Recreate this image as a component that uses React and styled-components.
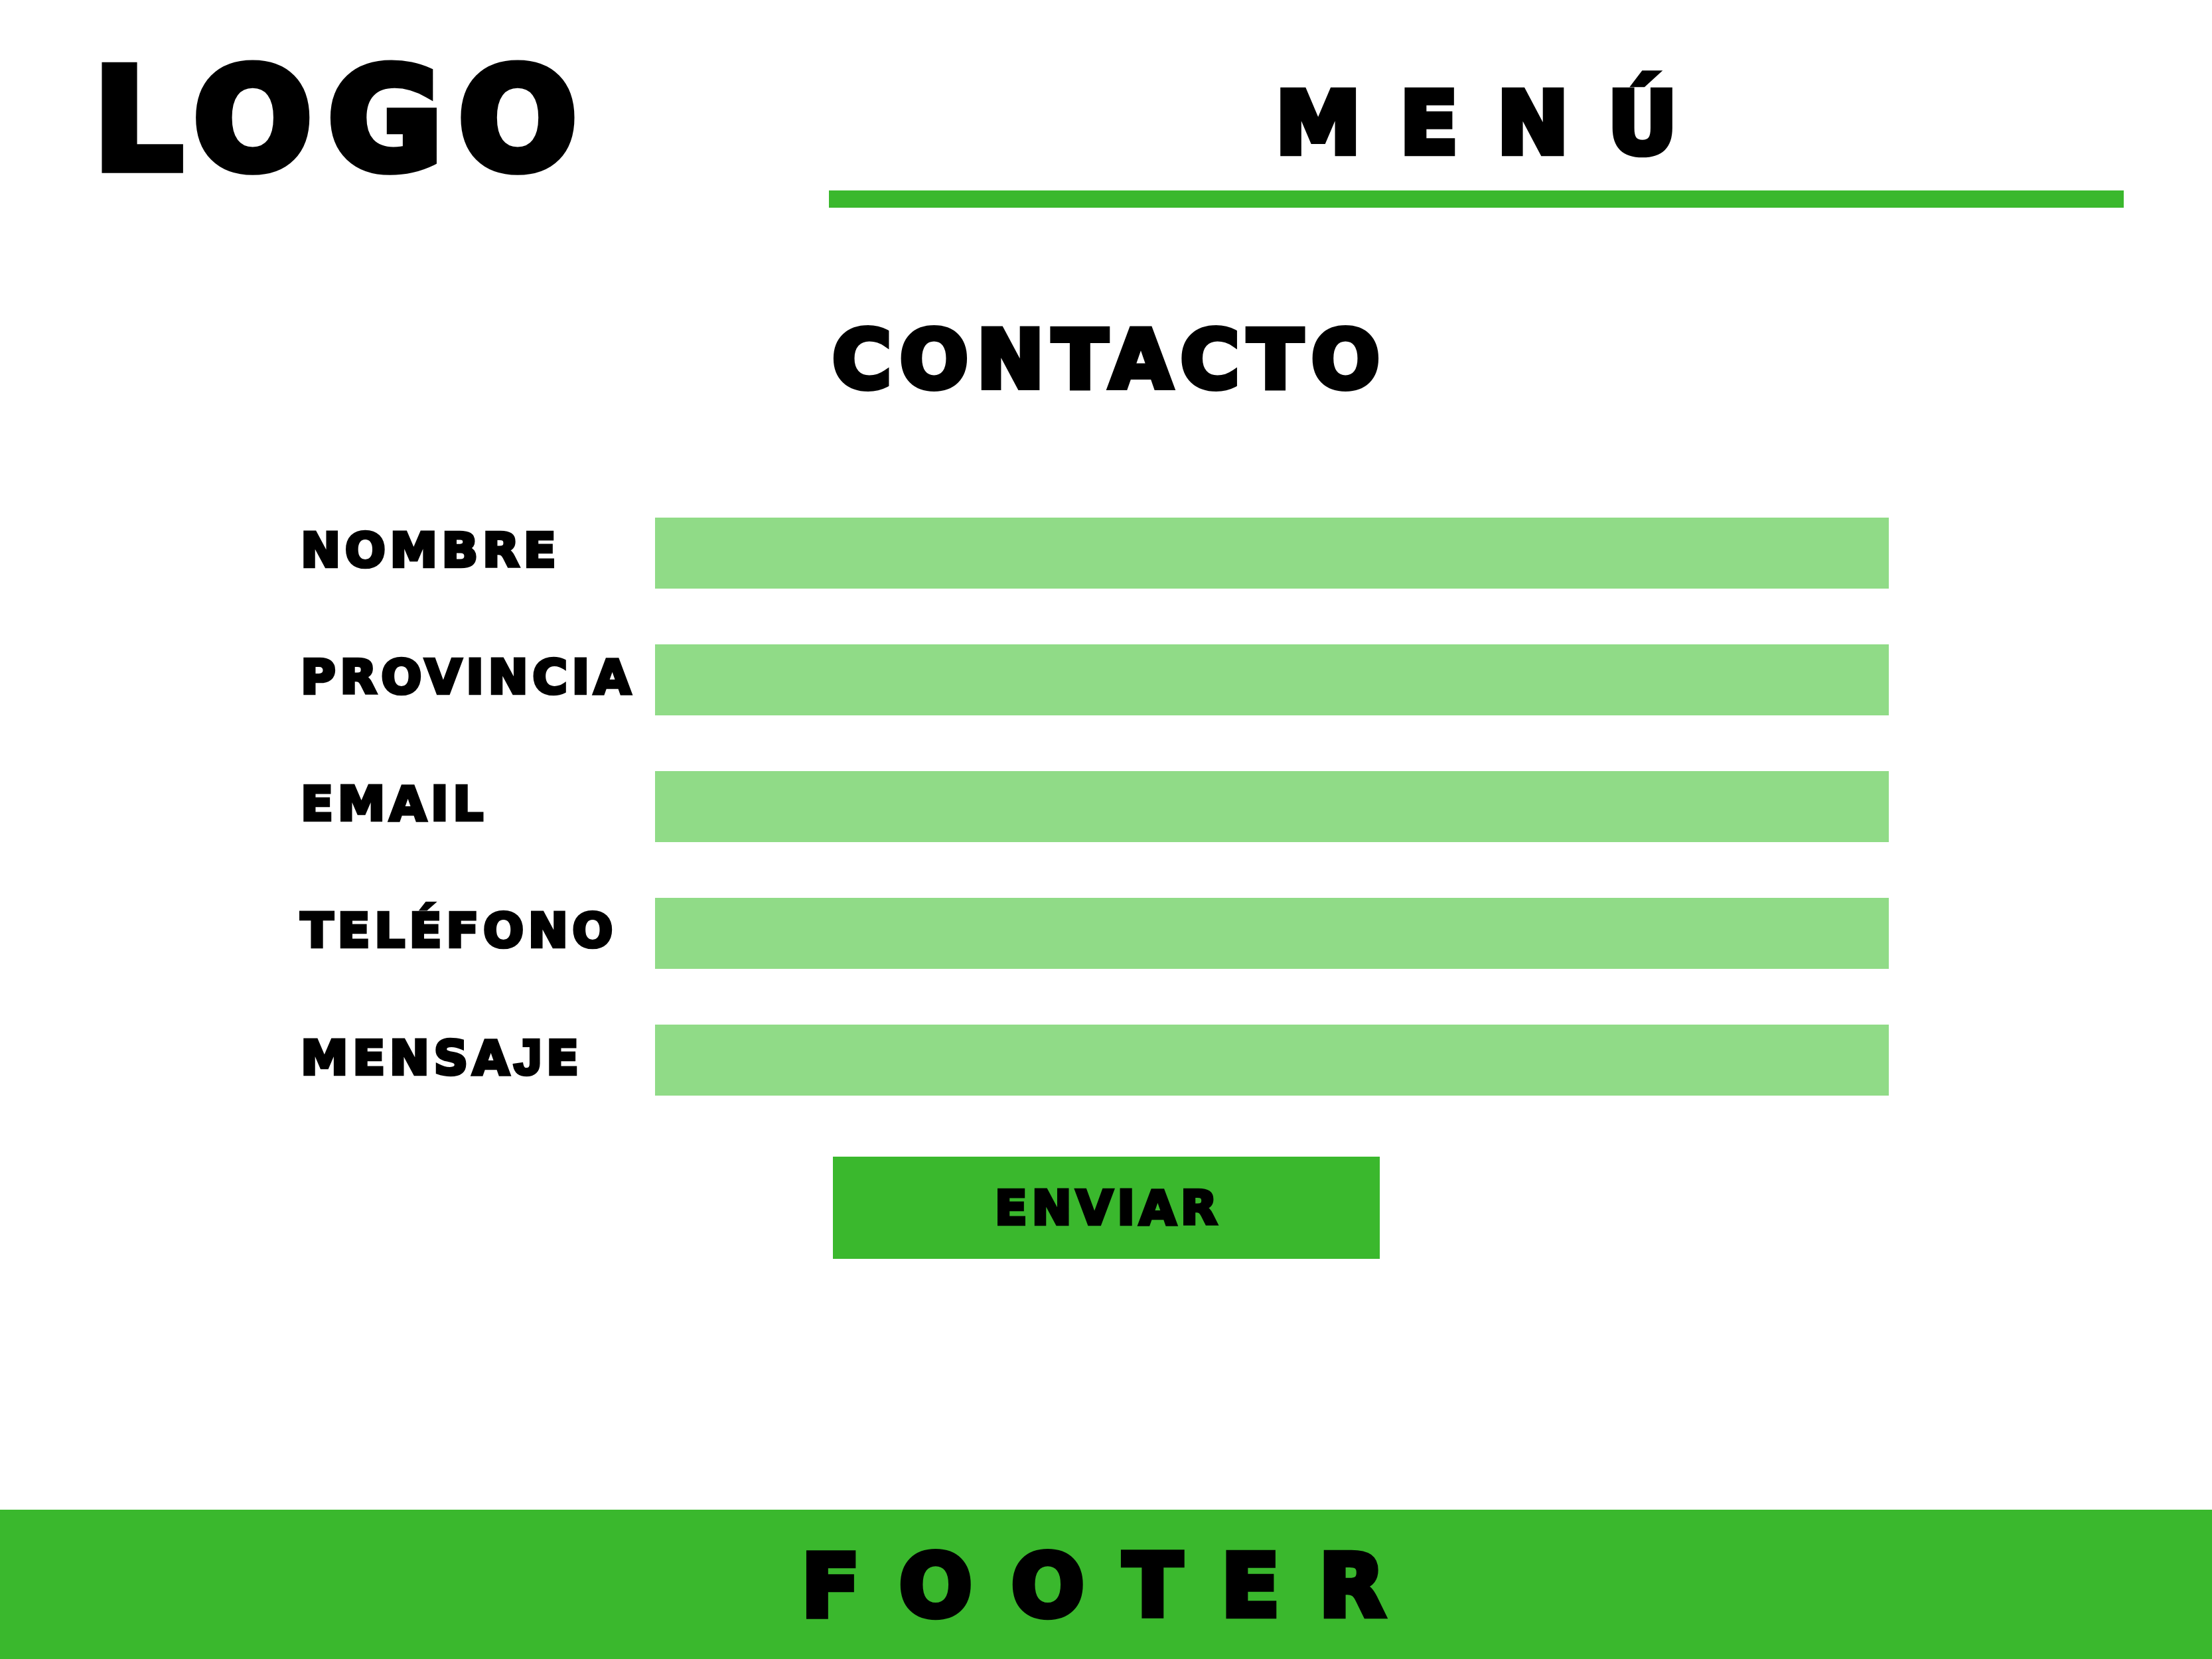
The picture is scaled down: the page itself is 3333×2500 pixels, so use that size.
import React from 'react';
import styled, { createGlobalStyle } from 'styled-components';

const GlobalStyle = createGlobalStyle`
    * {
        box-sizing: border-box;
    }

    html, body {
        margin: 0;
        padding: 0;
        background: #fff;
    }

    body {
        font-family: "DejaVu Sans", "Liberation Sans", sans-serif;
        font-weight: 700;
        color: #000;
    }
`;

const GREEN = '#3ab82d';
const LIGHT_GREEN = '#90db87';

// heavy look: bold face plus an outline
const Heavy = styled.span`
    font-weight: 700;
    line-height: 1;
    -webkit-text-stroke: 0.065em #000;
    letter-spacing: ${(p) => p.$spacing || '0.09em'};
    white-space: nowrap;
`;

// DejaVu's J drops below the baseline, the reference one sits on it
const FlatJ = styled.span`
    font-family: "Liberation Sans", sans-serif;
    font-size: 1.06em;
`;

const Page = styled.div`
    width: 3333px;
    min-height: 2500px;
    display: flex;
    flex-direction: column;
`;

const Header = styled.header`
    display: flex;
    align-items: flex-start;
    padding: 77px 133px 0 141px;
`;

const Logo = styled(Heavy)`
    display: block;
    font-size: 210px;
`;

const Nav = styled.nav`
    margin-left: auto;
    width: 1951px;
    padding-top: 44px;
    display: flex;
    flex-direction: column;
    align-items: center;
`;

const MenuLabel = styled(Heavy)`
    display: block;
    font-size: 130px;
    padding-left: 0.445em;
`;

const MenuBar = styled.div`
    width: 100%;
    height: 26px;
    margin-top: 36px;
    background: ${GREEN};
`;

const Main = styled.main`
    flex: 1;
    display: flex;
    flex-direction: column;
    align-items: center;
`;

const Title = styled(Heavy).attrs({ as: 'h1' })`
    margin: 168px 0 0 0;
    font-size: 122px;
    padding-left: 0.1em;
`;

const Form = styled.form`
    align-self: flex-start;
    margin: 177px 0 0 453px;
    display: grid;
    grid-template-columns: 534px 1859px;
    row-gap: 84px;
`;

const Label = styled(Heavy).attrs({ as: 'label' })`
    align-self: center;
    margin-bottom: 9px;
    font-size: 72px;
`;

const Field = styled.input`
    height: 107px;
    border: none;
    outline: none;
    padding: 0 24px;
    background: ${LIGHT_GREEN};
    font-family: "DejaVu Sans", sans-serif;
    font-size: 40px;
`;

const SendButton = styled.button`
    margin-top: 92px;
    width: 824px;
    height: 154px;
    border: none;
    padding: 0 0 0 0.09em;
    background: ${GREEN};
    font-family: "DejaVu Sans", sans-serif;
    font-size: 72px;
    cursor: pointer;
`;

const ButtonText = styled(Heavy)`
    font-size: 72px;
`;

const Footer = styled.footer`
    height: 225px;
    background: ${GREEN};
    display: flex;
    justify-content: center;
    padding-top: 50px;
    padding-left: 20px;
`;

const FooterText = styled(Heavy)`
    font-size: 130px;
`;

const fields = [
    { id: 'nombre', label: 'NOMBRE', type: 'text' },
    { id: 'provincia', label: 'PROVINCIA', type: 'text' },
    { id: 'email', label: 'EMAIL', type: 'email' },
    { id: 'telefono', label: 'TELÉFONO', type: 'tel' },
    { id: 'mensaje', label: <>MENSA<FlatJ>J</FlatJ>E</>, type: 'text' },
];

const App = () => {
    return (
        <Page>
            <GlobalStyle />
            <Header>
                <Logo $spacing="0.115em">LOGO</Logo>
                <Nav>
                    <MenuLabel $spacing="0.445em">MENÚ</MenuLabel>
                    <MenuBar />
                </Nav>
            </Header>

            <Main>
                <Title $spacing="0.1em">CONTACTO</Title>

                <Form onSubmit={(e) => e.preventDefault()}>
                    {fields.map((f) => (
                        <React.Fragment key={f.id}>
                            <Label htmlFor={f.id}>{f.label}</Label>
                            <Field id={f.id} name={f.id} type={f.type} />
                        </React.Fragment>
                    ))}
                </Form>

                <SendButton type="submit">
                    <ButtonText>ENVIAR</ButtonText>
                </SendButton>
            </Main>

            <Footer>
                <FooterText $spacing="0.45em">FOOTER</FooterText>
            </Footer>
        </Page>
    );
};

export default App;
